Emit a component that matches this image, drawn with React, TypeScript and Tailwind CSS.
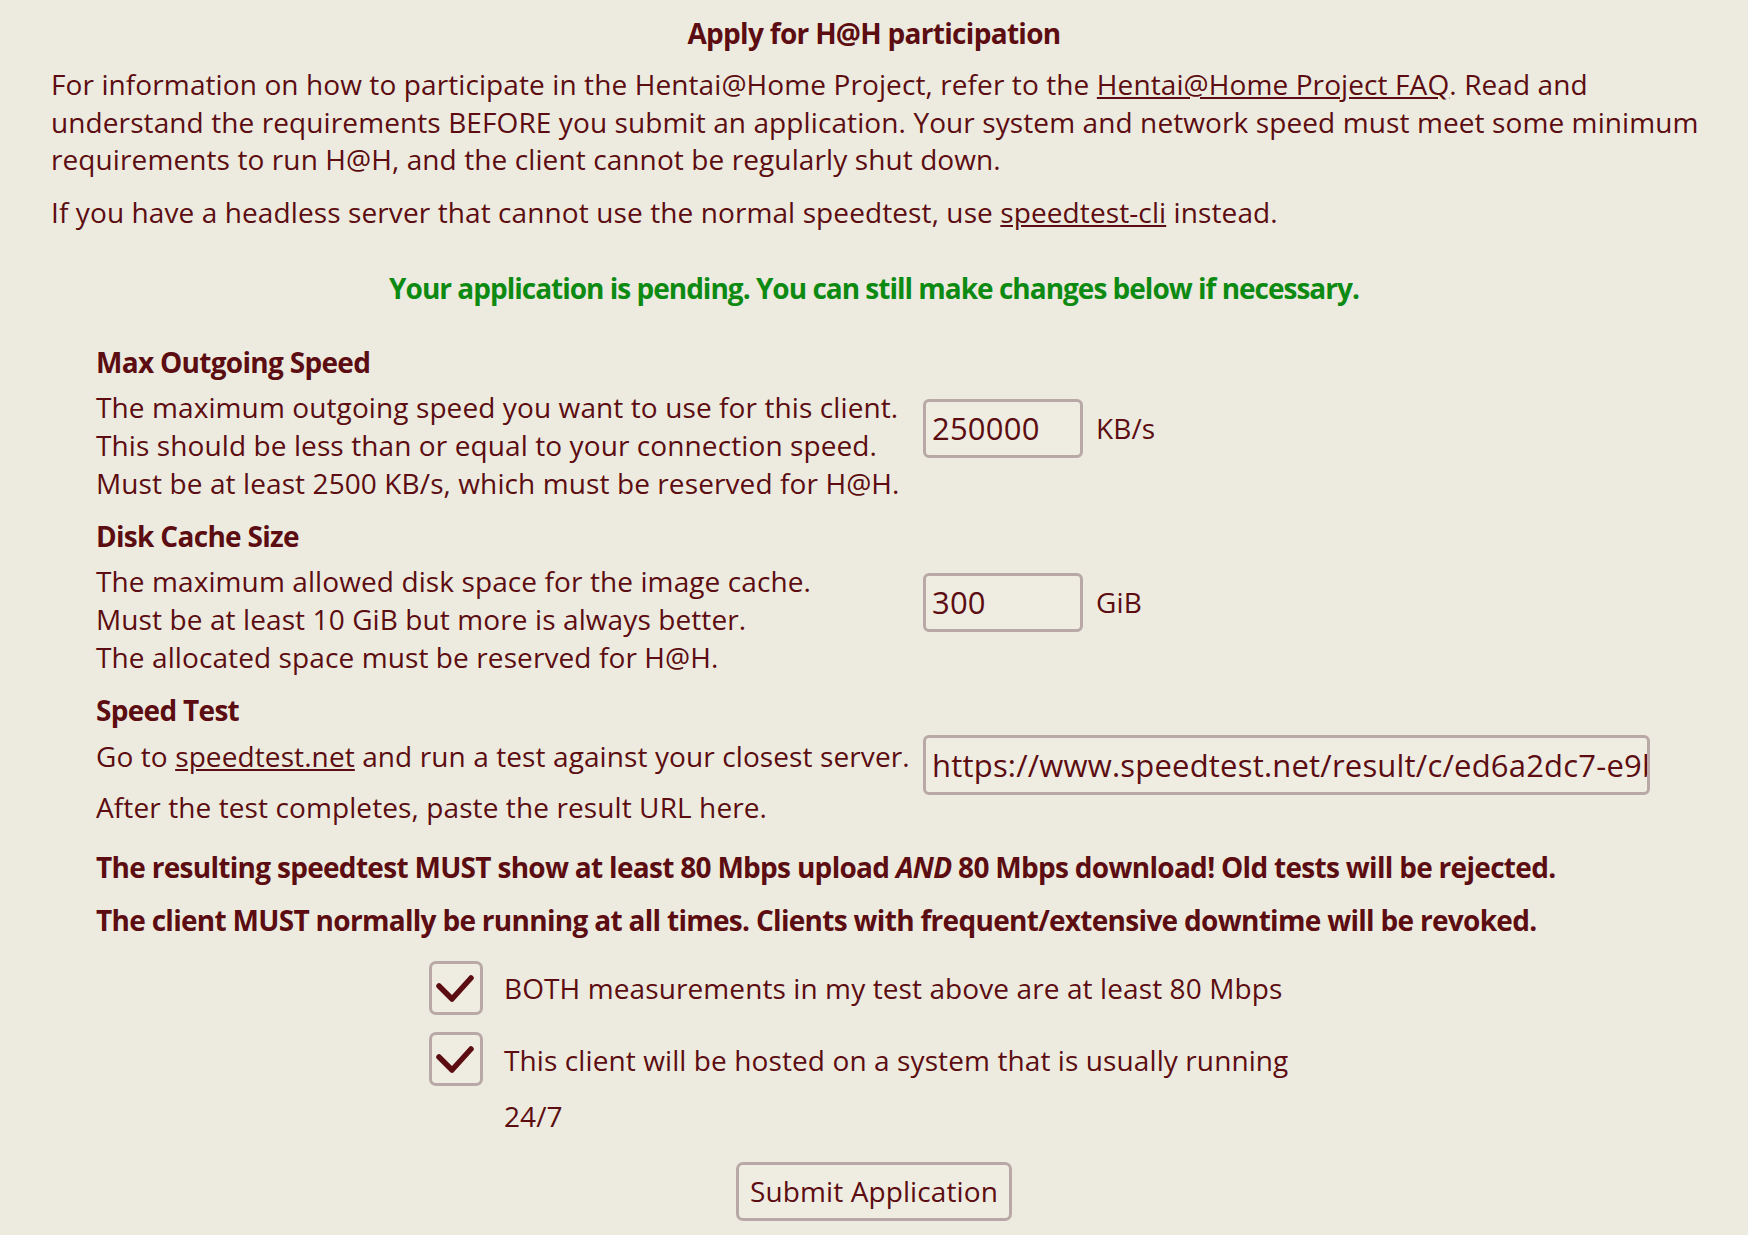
import React from "react";

const textLine = "leading-[38px]";
const boldText = "font-bold tracking-[-0.7px]";
const fieldBox =
  "h-[59px] border-[3px] border-[#b8a9a6] rounded-[6px] bg-[#efece2] pl-[6px] text-[31px] tracking-[0.2px] outline-none";

const Check = () => (
  <div className="w-[54px] h-[54px] shrink-0 border-[3px] border-[#b8a9a6] rounded-[7px] bg-[#efece2]">
    <svg width="48" height="48" viewBox="0 0 48 48">
      <polyline
        points="7,22 20,35 39,14"
        fill="none"
        stroke="#5c0d11"
        strokeWidth="5.5"
        strokeLinecap="round"
        strokeLinejoin="round"
      />
    </svg>
  </div>
);

const App = () => {
  return (
    <div className="w-[1748px] h-[1235px] overflow-hidden bg-[#edebdf] text-[#5c0d11] font-['Open_Sans',sans-serif] text-[28px] tracking-[0.1px]">
      <div className="px-[51px] pt-[14px]">
        <h1 className={`text-center ${boldText} ${textLine}`}>Apply for H@H participation</h1>

        <p className="mt-[14px] leading-[37.5px] whitespace-nowrap">
          For information on how to participate in the Hentai@Home Project, refer to the{" "}
          <a className="underline">Hentai@Home Project FAQ</a>. Read and
          <br />
          understand the requirements BEFORE you submit an application. Your system and network speed must meet some minimum
          <br />
          requirements to run H@H, and the client cannot be regularly shut down.
        </p>
        <p className={`mt-[14px] ${textLine}`}>
          If you have a headless server that cannot use the normal speedtest, use{" "}
          <a className="underline">speedtest-cli</a> instead.
        </p>

        <p className={`mt-[38px] text-center font-bold tracking-[-1px] text-[#0d8a12] ${textLine}`}>
          Your application is pending. You can still make changes below if necessary.
        </p>
      </div>

      <div className="pl-[96px] mt-[36px]">
        {/* outgoing speed */}
        <div className={`${boldText} ${textLine}`}>Max Outgoing Speed</div>
        <div className="flex items-start mt-[7px]">
          <div className={`w-[827px] ${textLine}`}>
            The maximum outgoing speed you want to use for this client.
            <br />
            This should be less than or equal to your connection speed.
            <br />
            Must be at least 2500 KB/s, which must be reserved for H@H.
          </div>
          <div className="flex items-center gap-[13px] mt-[11px]">
            <input defaultValue="250000" className={`w-[160px] ${fieldBox}`} />
            <span>KB/s</span>
          </div>
        </div>

        {/* cache size */}
        <div className={`${boldText} mt-[15px] ${textLine}`}>Disk Cache Size</div>
        <div className="flex items-start mt-[7px]">
          <div className={`w-[827px] ${textLine}`}>
            The maximum allowed disk space for the image cache.
            <br />
            Must be at least 10 GiB but more is always better.
            <br />
            The allocated space must be reserved for H@H.
          </div>
          <div className="flex items-center gap-[13px] mt-[11px]">
            <input defaultValue="300" className={`w-[160px] ${fieldBox}`} />
            <span>GiB</span>
          </div>
        </div>

        {/* speed test */}
        <div className={`${boldText} mt-[15px] ${textLine}`}>Speed Test</div>
        <div className="flex items-start mt-[6px]">
          <div className="w-[827px] pt-[2px] flex flex-col gap-[13px]">
            <div className={textLine}>
              Go to <a className="underline">speedtest.net</a> and run a test against your closest server.
            </div>
            <div className={textLine}>After the test completes, paste the result URL here.</div>
          </div>
          <input
            defaultValue="https://www.speedtest.net/result/c/ed6a2dc7-e9b4-4c7e-9d4a-5f1b3a8c2e61"
            className={`w-[727px] !h-[60px] ${fieldBox}`}
          />
        </div>

        <p className={`${boldText} mt-[22px] ${textLine}`}>
          The resulting speedtest MUST show at least 80 Mbps upload <i>AND</i> 80 Mbps download! Old tests will be rejected.
        </p>
        <p className={`${boldText} mt-[15px] ${textLine}`}>
          The client MUST normally be running at all times. Clients with frequent/extensive downtime will be revoked.
        </p>
      </div>

      <div className="pl-[429px] mt-[22px] flex flex-col">
        <label className="flex items-start gap-[21px]">
          <Check />
          <span className="leading-[54px]">BOTH measurements in my test above are at least 80 Mbps</span>
        </label>
        <label className="flex items-start gap-[21px] mt-[17px]">
          <Check />
          <span className="w-[800px] leading-[56px]">
            This client will be hosted on a system that is usually running
            <br />
            24/7
          </span>
        </label>
      </div>

      <div className="flex justify-center mt-[18px]">
        <button className="w-[276px] h-[59px] border-[3px] border-[#b8a9a6] rounded-[7px] bg-[#efece2] text-[28px]">
          Submit Application
        </button>
      </div>
    </div>
  );
};

export default App;
